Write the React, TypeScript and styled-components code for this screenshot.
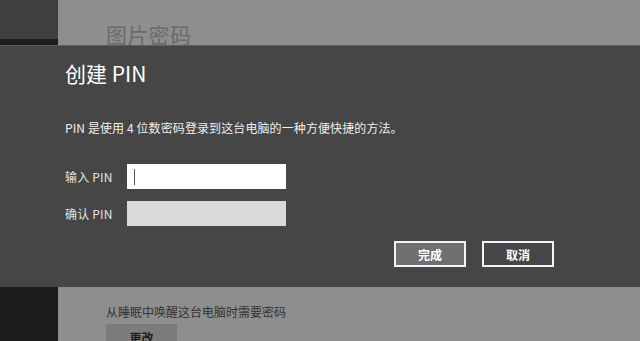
import React from "react";
import styled, { createGlobalStyle } from "styled-components";

const Global = createGlobalStyle`
  html, body { margin: 0; padding: 0; background: #8e8e8e; }
  body { font-family: "Noto Sans CJK SC", "Noto Sans", sans-serif; }
  * { box-sizing: border-box; }
`;

const Screen = styled.div`
  width: 640px;
  height: 341px;
  display: flex;
  flex-direction: column;
  overflow: hidden;
`;

const Band = styled.div<{ $h: number }>`
  height: ${(p) => p.$h}px;
  display: grid;
  grid-template-columns: 58px 1fr;
  overflow: hidden;
  flex: none;
`;

const LeftTop = styled.div`
  display: flex;
  flex-direction: column;
  justify-content: flex-end;
  background: #3f3f3f;
`;

const BlackStripe = styled.div`
  height: 9px;
  background: #1e1e1e;
`;

const LeftBottom = styled.div`
  background: #1c1c1c;
`;

const Settings = styled.div<{ $pt: number }>`
  background: #8e8e8e;
  padding: ${(p) => p.$pt}px 0 0 48px;
`;

const PageHeading = styled.div`
  font-size: 21px;
  line-height: 28px;
  color: #6a6a6a;
  letter-spacing: 0.3px;
`;

const Dialog = styled.div`
  height: 242px;
  flex: none;
  background: #464646;
  border-top: 1px solid #5e5e5e;
  padding: 12px 0 0 65px;
  display: flex;
  flex-direction: column;
`;

const Title = styled.h1`
  margin: 0;
  font-size: 21px;
  font-weight: 400;
  line-height: 30px;
  color: #ffffff;
`;

const Description = styled.p`
  margin: 32px 0 0;
  font-size: 12px;
  line-height: 16px;
  color: #eeeeee;
  letter-spacing: 0.1px;
`;

const Form = styled.div`
  margin-top: 28px;
  display: flex;
  flex-direction: column;
  gap: 12px;
`;

const FieldRow = styled.div`
  display: flex;
  align-items: center;
`;

const Label = styled.span`
  width: 62px;
  font-size: 12px;
  color: #e2e2e2;
  letter-spacing: 0.2px;
`;

const Input = styled.div<{ $disabled?: boolean }>`
  width: 159px;
  height: 25px;
  background: ${(p) => (p.$disabled ? "#d9d9d9" : "#ffffff")};
  display: flex;
  align-items: center;
  padding-left: 7px;
`;

const Caret = styled.div`
  width: 1px;
  height: 16px;
  background: #555;
`;

const Actions = styled.div`
  margin-top: 15px;
  padding-right: 86px;
  display: flex;
  justify-content: flex-end;
  gap: 16px;
`;

const Button = styled.div<{ $primary?: boolean }>`
  width: 72px;
  height: 26px;
  border: 2px solid #f4f4f4;
  background: ${(p) => (p.$primary ? "#707070" : "#464646")};
  color: #ffffff;
  font-size: 12px;
  font-weight: 700;
  display: flex;
  align-items: center;
  justify-content: center;
`;

const Note = styled.div`
  font-size: 12px;
  line-height: 16px;
  color: #333333;
`;

const ChangeButton = styled.div`
  margin-top: 4px;
  width: 71px;
  height: 26px;
  background: #7c7c7c;
  color: #1e1e1e;
  font-size: 12px;
  font-weight: 700;
  display: flex;
  align-items: center;
  justify-content: center;
`;

export default function App() {
  return (
    <>
      <Global />
      <Screen>
        <Band $h={45}>
          <LeftTop>
            <BlackStripe />
          </LeftTop>
          <Settings $pt={20}>
            <PageHeading>图片密码</PageHeading>
          </Settings>
        </Band>
        <Dialog>
          <Title>创建 PIN</Title>
          <Description>PIN 是使用 4 位数密码登录到这台电脑的一种方便快捷的方法。</Description>
          <Form>
            <FieldRow>
              <Label>输入 PIN</Label>
              <Input>
                <Caret />
              </Input>
            </FieldRow>
            <FieldRow>
              <Label>确认 PIN</Label>
              <Input $disabled />
            </FieldRow>
          </Form>
          <Actions>
            <Button $primary>完成</Button>
            <Button>取消</Button>
          </Actions>
        </Dialog>
        <Band $h={54}>
          <LeftBottom />
          <Settings $pt={17}>
            <Note>从睡眠中唤醒这台电脑时需要密码</Note>
            <ChangeButton>更改</ChangeButton>
          </Settings>
        </Band>
      </Screen>
    </>
  );
}
